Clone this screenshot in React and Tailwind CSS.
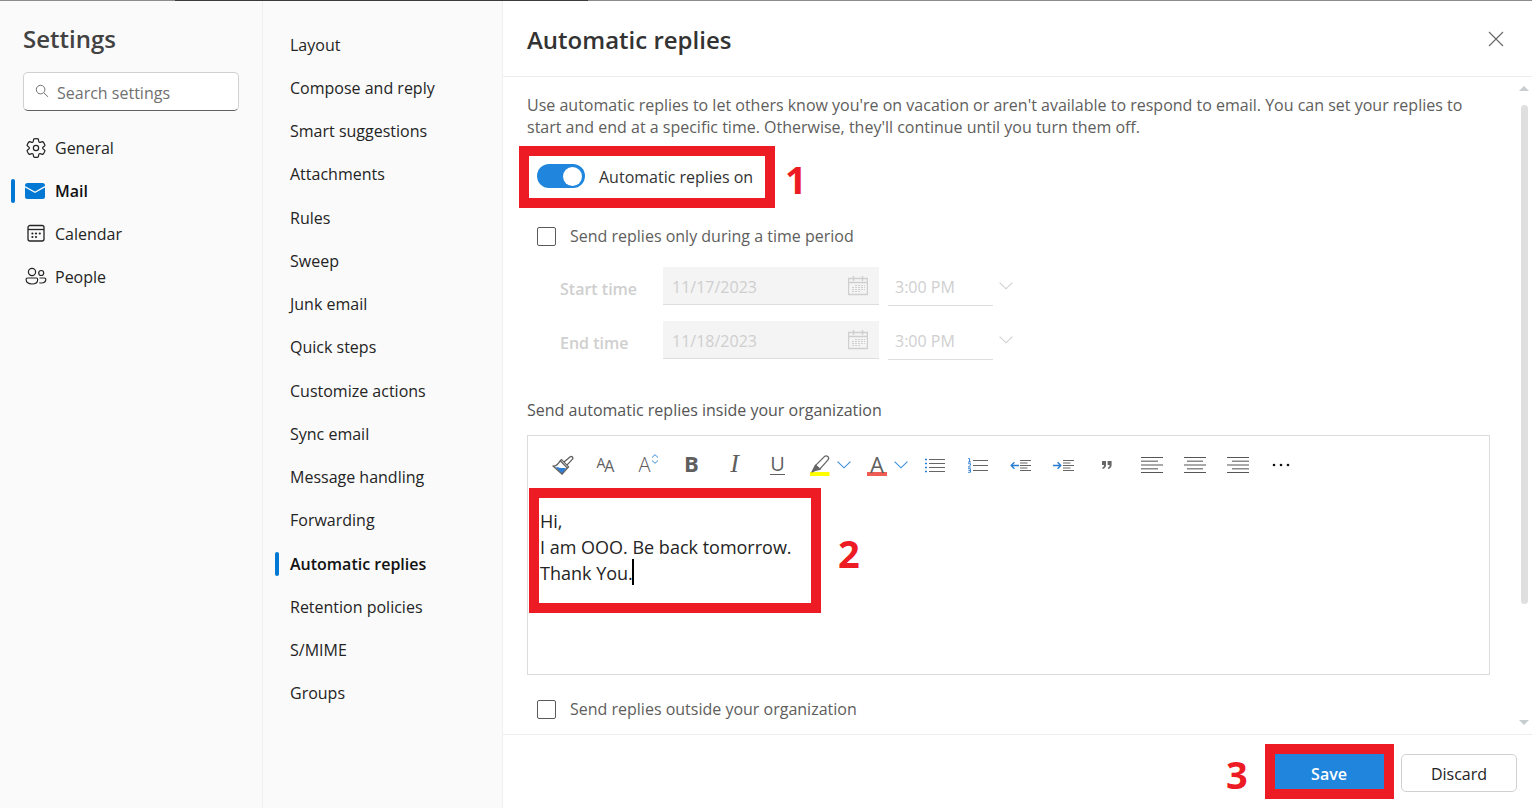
import React from "react";
import clsx from "clsx";

const GearIcon = () => (
  <svg viewBox="0 0 20 20" className="size-[22px]" fill="none" stroke="currentColor" strokeWidth="1.1">
    <path d="M1.91 7.38A8.5 8.5 0 0 1 3.7 4.3a.5.5 0 0 1 .54-.13l1.92.68a1 1 0 0 0 1.32-.76l.36-2a.5.5 0 0 1 .4-.4 8.53 8.53 0 0 1 3.55 0c.2.04.35.2.38.4l.37 2a1 1 0 0 0 1.32.76l1.92-.68a.5.5 0 0 1 .54.13 8.5 8.5 0 0 1 1.78 3.08c.06.2 0 .4-.15.54l-1.56 1.32a1 1 0 0 0 0 1.52l1.56 1.32a.5.5 0 0 1 .15.54 8.5 8.5 0 0 1-1.78 3.08.5.5 0 0 1-.54.13l-1.92-.68a1 1 0 0 0-1.32.76l-.37 2a.5.5 0 0 1-.38.4 8.53 8.53 0 0 1-3.56 0 .5.5 0 0 1-.39-.4l-.36-2a1 1 0 0 0-1.32-.76l-1.92.68a.5.5 0 0 1-.54-.13 8.5 8.5 0 0 1-1.78-3.08.5.5 0 0 1 .15-.54l1.56-1.32a1 1 0 0 0 0-1.52L2.06 7.92a.5.5 0 0 1-.15-.54Z" />
    <circle cx="10" cy="10" r="2.4" />
  </svg>
);

const MailIcon = () => (
  <svg viewBox="0 0 22 22" className="size-[22px]">
    <rect x="0" y="3" width="20" height="16" rx="2.5" fill="#0078d4" />
    <path d="M-0.5 6.4 10 12.2 20.5 6.4" fill="none" stroke="#fafafa" strokeWidth="1.3" />
  </svg>
);

const CalendarIcon = () => (
  <svg viewBox="0 0 22 22" className="size-[22px]" fill="none" stroke="currentColor" strokeWidth="1.3">
    <rect x="3" y="2.500" width="16" height="15.500" rx="2" />
    <path d="M3 6.500h16" />
    <g fill="currentColor" stroke="none">
      <circle cx="7.4" cy="10.5" r="1.1" />
      <circle cx="11" cy="10.5" r="1.1" />
      <circle cx="14.8" cy="10.5" r="1.1" />
      <circle cx="7.4" cy="14" r="1.1" />
      <circle cx="11" cy="14" r="1.1" />
    </g>
  </svg>
);

const PeopleIcon = () => (
  <svg viewBox="0 0 22 22" className="size-[22px]" fill="none" stroke="currentColor" strokeWidth="1.2">
    <circle cx="7" cy="6" r="3.6" />
    <circle cx="16.2" cy="7" r="2.5" />
    <path d="M2.500 12h8.800a1.400 1.400 0 0 1 1.400 1.400c0 3-2.300 4.600-5.800 4.600S1.100 16.400 1.100 13.400A1.400 1.400 0 0 1 2.500 12Z" />
    <path d="M14.500 12h5a1.300 1.300 0 0 1 1.300 1.300c0 2.400-1.800 3.700-4.400 3.700-.8 0-1.500-.1-2.100-.3" />
  </svg>
);

const SearchIcon = () => (
  <svg viewBox="0 0 14 14" className="size-[14px] shrink-0 -translate-y-px" fill="none" stroke="#707070" strokeWidth="1">
    <circle cx="5.6" cy="5.6" r="4.3" />
    <path d="m8.7 8.7 4.4 4.2" />
  </svg>
);

const DateIcon = () => (
  <svg viewBox="0 0 20 20" className="size-5 shrink-0" fill="none" stroke="#cfcfcf">
    <path d="M.5 2.5h19v16H.5zM.5 6.5h19M5.5 0v5M14.5 0v5" strokeWidth="1.4" />
    <path d="M7 9.5h10M4 11.500h13M4 13.500h13M4 15.500h9" strokeDasharray="2 1" strokeWidth="1.2" />
  </svg>
);

const Chevron = ({ color }) => (
  <svg viewBox="0 0 14 8" className="h-2 w-[14px] shrink-0" fill="none" stroke={color} strokeWidth="1.1">
    <path d="m.6.6 6.4 6.2L13.4.6" />
  </svg>
);

const BrushIcon = () => (
  <svg viewBox="0 0 22 22" className="size-[22px]" fill="none" stroke="#5f5f5f" strokeWidth="1.3" strokeLinejoin="round">
    <path d="M4.4 12.8c2 1 5.400 1.500 9.600 1.200l-3.600 6-6.200-6Z" fill="#2b7cd3" stroke="none" />
    <path d="m9.600 5.600 7 7.300-1.200 1.100-5.200 6.200L1 12c3.200.4 5.300-2.300 7.200-5.200Z" />
    <path d="m8.200 6.800 7.200 7.300M12 8l6.300-5.200c1.700-.9 3.200.8 2.200 2.300l-5.600 6" />
  </svg>
);

const HighlighterIcon = () => (
  <svg viewBox="0 0 20 22" className="h-[22px] w-5" fill="none" stroke="#666" strokeWidth="1.3" strokeLinejoin="round">
    <path d="M0 18h19.5v4H0z" fill="#ffff00" stroke="none" />
    <path d="M5.6 11.4 14.4 2.6c2.4-2 5.4.8 3.6 3.3l-8.2 9.2Z" />
    <path d="M5.4 11.2 10 15.4l-3.6.6L2 18Z" fill="#666" />
  </svg>
);

const BulletsIcon = () => (
  <svg viewBox="0 0 22 16" className="h-4 w-[22px]" strokeWidth="1.1">
    <path d="M5 2.5h16M5 6.5h16M5 10.5h16M5 14.5h16" stroke="#666" />
    <path d="M1 2.5h2M1 6.5h2M1 10.5h2M1 14.5h2" stroke="#2b7cd3" strokeWidth="1.4" />
  </svg>
);

const NumbersIcon = () => (
  <svg viewBox="0 0 22 16" className="h-4 w-[22px]" fill="none">
    <path d="M6 3.5h15M6 8.5h15M6 13.5h15" stroke="#666" strokeWidth="1.2" />
    <g stroke="#2b7cd3" strokeWidth=".9">
      <path d="M1.200 1.500h1.300v3.500M1 5h3" />
      <path d="M1 6.700h2.500v1.500L1.300 10h2.500" />
      <path d="M1 11.700h2.500v3.600H1M1.500 13.500h2" />
    </g>
  </svg>
);

const IndentIcon = ({ arrow }) => (
  <svg viewBox="0 0 22 16" className="h-4 w-[22px]" fill="none">
    <path d="M10 3.5h11M10 13.5h11M10 8.5h11" stroke="#666" strokeWidth="1.1" />
    <path d="M10 6h7.5M10 11h7.5" stroke="#9a9a9a" strokeWidth="1.6" />
    <path d={arrow} stroke="#2b7cd3" strokeWidth="1.4" />
  </svg>
);

const QuoteIcon = () => (
  <svg viewBox="0 0 12 10" className="h-[10px] w-3" fill="#666">
    <path d="M1 1h4v4c0 2-1.3 3.6-3.4 4L1.2 7.8C2.4 7.3 3 6.5 3 5H1Z" />
    <path d="M6.6 1h4v4c0 2-1.3 3.6-3.4 4l-.4-1.2C8 7.3 8.6 6.5 8.6 5h-2Z" />
  </svg>
);

const AlignIcon = ({ short }) => (
  <svg viewBox="0 0 22 18" className="h-[18px] w-[22px]" strokeWidth="1.2">
    <path d="M0 1.5h22M0 9h22M0 16.5h22" stroke="#555" />
    <path d={short} stroke="#8a8a8a" strokeWidth="1.5" />
  </svg>
);

const sections = [
  { name: "General", icon: GearIcon },
  { name: "Mail", icon: MailIcon },
  { name: "Calendar", icon: CalendarIcon },
  { name: "People", icon: PeopleIcon },
];

const mailPages = [
  "Layout",
  "Compose and reply",
  "Smart suggestions",
  "Attachments",
  "Rules",
  "Sweep",
  "Junk email",
  "Quick steps",
  "Customize actions",
  "Sync email",
  "Message handling",
  "Forwarding",
  "Automatic replies",
  "Retention policies",
  "S/MIME",
  "Groups",
];

const times = [
  { id: "start", label: "Start time", date: "11/17/2023" },
  { id: "end", label: "End time", date: "11/18/2023" },
];

const ToolButton = ({ label, children }) => (
  <button aria-label={label} className="flex h-8 w-[43px] items-center justify-center text-[#5f5f5f]">
    {children}
  </button>
);

const ColorButton = ({ label, children }) => (
  <div className="flex h-8 w-[57px] items-center">
    <button aria-label={label} className="flex w-[38px] justify-center pl-1">
      {children}
    </button>
    <button aria-label={label + " options"} className="flex h-8 w-[19px] items-center">
      <Chevron color="#3a8ddd" />
    </button>
  </div>
);

const Toolbar = () => (
  <div className="flex items-center pt-[13px] pl-[13px]">
    <ToolButton label="Format painter"><BrushIcon /></ToolButton>
    <ToolButton label="Font">
      <span className="pb-1 text-sm">A</span>
      <span className="-ml-px pt-px text-base">A</span>
    </ToolButton>
    <ToolButton label="Font size">
      <span className="text-xl font-light">A</span>
      <svg viewBox="0 0 8 10" className="mb-3 h-[10px] w-2" fill="none" stroke="#3a8ddd">
        <path d="M1 3.5 4 .7l3 2.8M1 6.5l3 2.8 3-2.8" />
      </svg>
    </ToolButton>
    <ToolButton label="Bold"><span className="pb-1 text-[22px] font-bold">B</span></ToolButton>
    <ToolButton label="Italic"><span className="pb-1 font-['Liberation_Serif',serif] text-[26px] italic">I</span></ToolButton>
    <ToolButton label="Underline"><span className="h-5 border-b border-[#5f5f5f] text-xl leading-[18px]">U</span></ToolButton>
    <ColorButton label="Highlight"><HighlighterIcon /></ColorButton>
    <ColorButton label="Font color">
      <span className="flex h-[22px] w-5 justify-center border-b-4 border-[#ee5c54] text-[22px] leading-[20px] text-[#5f5f5f]">A</span>
    </ColorButton>
    <ToolButton label="Bullets"><BulletsIcon /></ToolButton>
    <ToolButton label="Numbering"><NumbersIcon /></ToolButton>
    <ToolButton label="Decrease indent"><IndentIcon arrow="M9 8.5H1.2M4.4 5.3 1.2 8.5l3.2 3.2" /></ToolButton>
    <ToolButton label="Increase indent"><IndentIcon arrow="M0 8.5h7.8M4.6 5.3l3.2 3.2-3.2 3.2" /></ToolButton>
    <ToolButton label="Quote"><QuoteIcon /></ToolButton>
    <div className="flex pl-0.5">
      <ToolButton label="Align left"><AlignIcon short="M0 5.2h17M0 12.8h17" /></ToolButton>
      <ToolButton label="Align center"><AlignIcon short="M3 5.2h16M3 12.8h16" /></ToolButton>
      <ToolButton label="Align right"><AlignIcon short="M5 5.2h17M5 12.8h17" /></ToolButton>
      <ToolButton label="More">
        <svg viewBox="0 0 18 4" className="h-1 w-[18px]" fill="#111">
          <circle cx="2" cy="2" r="1.3" />
          <circle cx="9" cy="2" r="1.3" />
          <circle cx="16" cy="2" r="1.3" />
        </svg>
      </ToolButton>
    </div>
  </div>
);

const NavMarker = () => <span className="absolute left-0 h-6 w-1 rounded-full bg-[#0078d4]" />;

const Step = ({ className, children }) => (
  <span className={clsx("absolute text-[38px] leading-10 font-bold text-[#ed1c24]", className)}>{children}</span>
);

const Check = ({ id, label }) => (
  <div className="flex items-center pl-[10px]">
    <input id={id} type="checkbox" className="size-[19px] appearance-none rounded-xs border border-[#5a5a5a]" />
    <label htmlFor={id} className="pl-[14px] leading-5 text-[#605e5c]">{label}</label>
  </div>
);

const App = () => {
  return (
    <div className="flex h-screen flex-col bg-white font-['Open_Sans','Noto_Sans',sans-serif] text-base text-[#242424]">
      <div className="flex h-px shrink-0">
        <div className="w-[175px] bg-[#8c8c8c]" />
        <div className="w-[413px] bg-[#3b3b3b]" />
        <div className="flex-1 bg-[#8c8c8c]" />
      </div>
      <div className="flex min-h-0 flex-1">
        <aside className="w-[263px] shrink-0 border-r border-[#efefef] bg-[#fafafa] pt-[22px]">
          <h1 className="pl-[23px] text-2xl leading-8 font-semibold text-[#424242]">Settings</h1>
          <div className="mx-[23px] mt-[17px] flex h-[39px] items-center gap-2 rounded-[5px] border border-[#d1d1d1] border-b-[#616161] bg-white pl-[11px]">
            <SearchIcon />
            <input
              type="text"
              aria-label="Search settings"
              placeholder="Search settings"
              className="w-full min-w-0 pt-0.5 outline-none placeholder:text-[#707070]"
            />
          </div>
          <nav className="mt-[15px] pl-[11px]">
            {sections.map(({ name, icon: Icon }) => (
              <a key={name} href="#" className={clsx("relative flex h-[43px] items-center gap-2 pl-[14px]", name === "Mail" && "font-semibold text-[#111]")}>
                {name === "Mail" && <NavMarker />}
                <Icon />
                {name}
              </a>
            ))}
          </nav>
        </aside>

        <nav className="w-[240px] shrink-0 border-r border-[#efefef] bg-[#fafafa] pt-[22px] pl-3">
          <div className="grid min-h-[692px] auto-rows-fr">
            {mailPages.map((page) => (
              <a key={page} href="#" className={clsx("relative flex items-center pl-[15px]", page === "Automatic replies" && "font-semibold text-[#111]")}>
                {page === "Automatic replies" && <NavMarker />}
                {page}
              </a>
            ))}
          </div>
        </nav>

        <main className="flex min-w-0 flex-1 flex-col">
          <header className="flex h-[76px] shrink-0 items-center justify-between border-b border-[#ededed] pr-7 pl-6">
            <h2 className="pt-0.5 text-2xl leading-8 font-semibold text-[#333]">Automatic replies</h2>
            <button aria-label="Close">
              <svg viewBox="0 0 16 16" className="size-4" stroke="#666" strokeWidth="1.1">
                <path d="m1 1 14 14M15 1 1 15" />
              </svg>
            </button>
          </header>

          <div className="flex min-h-0 flex-1">
            <div className="min-w-0 flex-1 overflow-hidden pt-[17px] pr-7 pl-6">
              <p className="leading-[22px] text-[#605e5c]">
                Use automatic replies to let others know you're on vacation or aren't available to respond to email. You can set your replies to start and end at a specific time. Otherwise, they'll continue until you turn them off.
              </p>

              <div className="relative mt-[26px] flex h-6 items-center pl-[10px]">
                <input
                  id="auto"
                  type="checkbox"
                  role="switch"
                  defaultChecked
                  className="flex h-6 w-12 appearance-none items-center justify-end rounded-full bg-[#2086dd] pr-[3px] before:size-[19px] before:rounded-full before:bg-white"
                />
                <label htmlFor="auto" className="pt-0.5 pl-[14px] text-[#333]">Automatic replies on</label>
                <div className="pointer-events-none absolute top-[-18px] left-[-8px] h-[62px] w-64 border-[10px] border-[#ed1c24]" />
                <Step className="top-[-5px] left-[258px]">1</Step>
              </div>

              <div className="mt-[38px]">
                <Check id="period" label="Send replies only during a time period" />
              </div>

              <div className="mt-[21px] flex flex-col gap-4 pl-[33px] text-[#cfcfcf]">
                {times.map(({ id, label, date }) => (
                  <div key={id} className="flex h-[38px] items-center">
                    <label htmlFor={id} className="w-[103px] pt-1.5 font-semibold">{label}</label>
                    <div className="flex h-full w-[216px] items-center border-b border-[#dedede] bg-[#f4f4f4] pr-[11px] pl-[9px]">
                      <input id={id} type="text" disabled defaultValue={date} className="w-full min-w-0 pt-0.5" />
                      <DateIcon />
                    </div>
                    <select aria-label={label + " hour"} disabled className="ml-[9px] h-[39px] w-[105px] appearance-none border-b border-[#dedede] pt-0.5 pl-[7px]">
                      <option>3:00 PM</option>
                    </select>
                    <div className="ml-[6px]"><Chevron color="#cfcfcf" /></div>
                  </div>
                ))}
              </div>

              <label htmlFor="message" className="mt-[39px] block leading-6 text-[#555]">Send automatic replies inside your organization</label>

              <div className="relative mt-[13px] h-60 border border-[#dcdcdc]">
                <Toolbar />
                <textarea
                  id="message"
                  defaultValue={"Hi,\nI am OOO. Be back tomorrow.\nThank You."}
                  className="mt-[27px] block h-32 w-full resize-none pl-3 text-lg leading-[26px] outline-none"
                />
                <div className="pointer-events-none absolute top-[52px] left-px h-[125px] w-[292px] border-[10px] border-[#ed1c24]" />
                <span className="absolute top-[123px] left-[104px] h-[26px] w-[2px] bg-black" />
                <Step className="top-[97px] left-[310px]">2</Step>
              </div>

              <div className="mt-6">
                <Check id="outside" label="Send replies outside your organization" />
              </div>
            </div>

            <div className="flex w-4 shrink-0 flex-col items-center pt-2 pb-2 -ml-0.5">
              <svg viewBox="0 0 10 6" className="h-[6px] w-[10px]" fill="#c8cdd0"><path d="m0 6 5-5 5 5Z" /></svg>
              <div className="my-[14px] w-[7px] flex-1">
                <div className="h-[83%] rounded-full bg-[#dfdfdf]" />
              </div>
              <svg viewBox="0 0 10 6" className="h-[6px] w-[10px]" fill="#c8cdd0"><path d="m0 0 5 5 5-5Z" /></svg>
            </div>
          </div>

          <footer className="flex h-[74px] shrink-0 items-center justify-end gap-[14px] border-t border-[#ededed] pt-0.5 pr-[15px]">
            <div className="relative">
              <button className="h-[38px] w-[116px] rounded bg-[#2086dd] pt-0.5 font-semibold text-white">Save</button>
              <div className="pointer-events-none absolute top-[-10px] left-[-6px] h-[55px] w-[129px] border-[10px] border-[#ed1c24]" />
              <Step className="top-0 left-[-45px]">3</Step>
            </div>
            <button className="h-[38px] w-[116px] rounded-[5px] border border-[#d1d1d1] pt-0.5">Discard</button>
          </footer>
        </main>
      </div>
    </div>
  );
};

export default App;
